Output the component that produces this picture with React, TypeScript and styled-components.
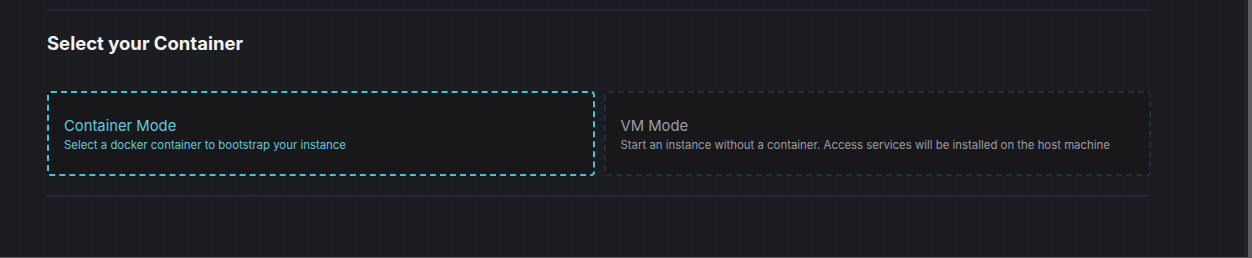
import styled, { createGlobalStyle } from "styled-components";

const GlobalStyle = createGlobalStyle`
  html, body {
    margin: 0;
    padding: 0;
    background: #5d5d62;
  }
  body {
    font-family: Inter, "Noto Sans", "Liberation Sans", sans-serif;
  }
`;

interface IModeCard {
  active?: boolean;
}

const Page = styled.div`
  width: 1248px;
  height: 257px;
  box-sizing: border-box;
  background-color: #1a1b1f;
  background-image:
    repeating-linear-gradient(0deg, rgba(255, 255, 255, 0.012) 0 1px, transparent 1px 3px),
    repeating-linear-gradient(90deg, rgba(255, 255, 255, 0.012) 0 1px, transparent 1px 3px);
  border-right: 4px solid #222328;
  padding: 9px 0 0 47px;
`;

const Section = styled.section`
  width: 1104px;
  border-top: 2px solid #232838;
  border-bottom: 2px solid #232838;
  padding: 21px 0 19px;
`;

const Title = styled.h2`
  margin: 0 0 37px;
  font-size: 18.5px;
  line-height: 22px;
  font-weight: 700;
  color: #f2f2f4;
`;

const CardRow = styled.div`
  display: grid;
  grid-template-columns: 1fr 1fr;
  gap: 9px;
`;

const ModeCard = styled.div<IModeCard>`
  height: 85px;
  box-sizing: border-box;
  display: flex;
  flex-direction: column;
  justify-content: center;
  gap: 3px;
  padding: 2px 15px 0;
  border-radius: 4px;
  background: #18181b;
  border: 2px dashed ${(p) => (p.active ? "#4bbfd8" : "#252c40")};
  cursor: pointer;
`;

const CardTitle = styled.div<IModeCard>`
  font-size: 14.8px;
  line-height: 18px;
  color: ${(p) => (p.active ? "#63c8dc" : "#9c9ca4")};
`;

const CardText = styled.div<IModeCard>`
  font-size: 11.4px;
  line-height: 14px;
  color: ${(p) => (p.active ? "#63c8dc" : "#9c9ca4")};
`;

const modes = [
  {
    name: "Container Mode",
    text: "Select a docker container to bootstrap your instance",
    active: true,
  },
  {
    name: "VM Mode",
    text: "Start an instance without a container. Access services will be installed on the host machine",
    active: false,
  },
];

export default function App() {
  return (
    <>
      <GlobalStyle />
      <Page>
        <Section>
          <Title>Select your Container</Title>
          <CardRow>
            {modes.map((m) => (
              <ModeCard key={m.name} active={m.active}>
                <CardTitle active={m.active}>{m.name}</CardTitle>
                <CardText active={m.active}>{m.text}</CardText>
              </ModeCard>
            ))}
          </CardRow>
        </Section>
      </Page>
    </>
  );
}
